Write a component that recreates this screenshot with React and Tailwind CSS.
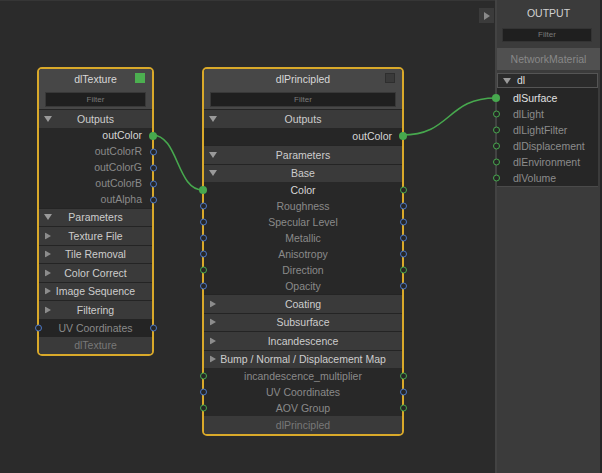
const Down = () => (
  <svg width="8" height="6" viewBox="0 0 8 6" className="absolute left-[5px] top-1/2 -translate-y-1/2">
    <polygon points="0,0 8,0 4,6" fill="#9a9a9a" />
  </svg>
);

const Right = () => (
  <svg width="6" height="7" viewBox="0 0 6 7" className="absolute left-[6px] top-1/2 -translate-y-1/2">
    <polygon points="0,0 6,3.5 0,7" fill="#8c8c8c" />
  </svg>
);

// port dot sitting on the node border
const Port = ({ side, color, filled }) => {
  if (filled) {
    return (
      <span
        className={`absolute top-1/2 h-[8px] w-[8px] -translate-y-1/2 rounded-full bg-[#47a84e] ${
          side === "left" ? "-left-[5px]" : "-right-[5px]"
        }`}
      />
    );
  }
  return (
    <span
      className={`absolute top-1/2 h-[7px] w-[7px] -translate-y-1/2 rounded-full border-[1.5px] bg-[#262626] ${
        side === "left" ? "-left-[4.5px]" : "-right-[4.5px]"
      } ${color === "green" ? "border-[#47a84e]" : "border-[#4b77c6]"}`}
    />
  );
};

const Section = ({ label, open }) => (
  <div className="relative flex h-[18.5px] items-center justify-center border-t border-[#242424] bg-[#3a3a3a] text-[#cdcdcd]">
    {open ? <Down /> : <Right />}
    <span>{label}</span>
  </div>
);

// row = [label, active, leftPort, rightPort]
const Row = ({ row, align = "center" }) => {
  const [label, active, left, right] = row;
  return (
    <div
      className={`relative flex h-[16px] items-center ${
        align === "right" ? "justify-end pr-[10px]" : "justify-center"
      } ${active ? "text-[#d6d6d6]" : "text-[#8a8a8a]"}`}
    >
      {left && <Port side="left" color={left.color} filled={left.filled} />}
      <span>{label}</span>
      {right && <Port side="right" color={right.color} filled={right.filled} />}
    </div>
  );
};

const NodeHead = ({ title, swatch }) => (
  <>
    <div className="relative flex h-[21px] items-center justify-center rounded-t-[3px] bg-[#474747] text-[#d8d8d8]">
      {title}
      <span className={`absolute right-[7px] top-[4px] h-[10px] w-[10px] ${swatch}`} />
    </div>
    <div className="bg-[#474747] px-[6px] py-[2px]">
      <div className="flex h-[15px] items-center justify-center border border-[#383838] bg-[#1f1f1f] text-[8px] text-[#7a7a7a]">
        Filter
      </div>
    </div>
  </>
);

const B = { color: "blue" };
const G = { color: "green" };
const GF = { color: "green", filled: true };

const textureOutputs = [
  ["outColor", true, null, GF],
  ["outColorR", false, null, B],
  ["outColorG", false, null, B],
  ["outColorB", false, null, B],
  ["outAlpha", false, null, B],
];

const textureSections = ["Texture File", "Tile Removal", "Color Correct", "Image Sequence", "Filtering"];

const baseRows = [
  ["Color", true, GF, G],
  ["Roughness", false, B, B],
  ["Specular Level", false, B, B],
  ["Metallic", false, B, B],
  ["Anisotropy", false, B, B],
  ["Direction", false, G, G],
  ["Opacity", false, B, B],
];

const extraRows = [
  ["incandescence_multiplier", false, G, G],
  ["UV Coordinates", false, B, B],
  ["AOV Group", false, G, G],
];

const outputs = ["dlSurface", "dlLight", "dlLightFilter", "dlDisplacement", "dlEnvironment", "dlVolume"];

export default function App() {
  return (
    <div className="relative flex h-[473px] w-[602px] overflow-hidden bg-[#2b2b2b] font-['Liberation_Sans',Arial,sans-serif] text-[10.5px] leading-none">
      {/* Canvas */}
      <div className="relative flex-1 shadow-[inset_0_1px_0_#363636]">
        {/* dlTexture */}
        <div className="absolute left-[37px] top-[67px] w-[117px] rounded-[5px] border-2 border-[#d9a92a] bg-[#282828]">
          <NodeHead title="dlTexture" swatch="bg-[#4caf50]" />
          <Section label="Outputs" open />
          {textureOutputs.map((r) => (
            <Row key={r[0]} row={r} align="right" />
          ))}
          <Section label="Parameters" open />
          {textureSections.map((s) => (
            <Section key={s} label={s} />
          ))}
          <div className="relative flex h-[18px] items-center justify-center border-t border-[#242424] bg-[#242424] text-[#8a8a8a]">
            <Port side="left" color="blue" />
            <span>UV Coordinates</span>
            <Port side="right" color="blue" />
          </div>
          <div className="flex h-[17.5px] items-center justify-center rounded-b-[3px] bg-[#3a3a3a] text-[#787878]">
            dlTexture
          </div>
        </div>

        {/* dlPrincipled */}
        <div className="absolute left-[202px] top-[67px] w-[202px] rounded-[5px] border-2 border-[#d9a92a] bg-[#282828]">
          <NodeHead title="dlPrincipled" swatch="bg-[#3a3a3a] border border-[#2e2e2e]" />
          <Section label="Outputs" open />
          <div className="relative flex h-[17.5px] items-center justify-end bg-[#262626] pr-[10px] text-[#d6d6d6]">
            <span>outColor</span>
            <Port side="right" color="green" filled />
          </div>
          <Section label="Parameters" open />
          <Section label="Base" open />
          {baseRows.map((r) => (
            <Row key={r[0]} row={r} />
          ))}
          <Section label="Coating" />
          <Section label="Subsurface" />
          <Section label="Incandescence" />
          <Section label="Bump / Normal / Displacement Map" />
          {extraRows.map((r) => (
            <Row key={r[0]} row={r} />
          ))}
          <div className="flex h-[18px] items-center justify-center rounded-b-[3px] bg-[#3a3a3a] text-[#787878]">
            dlPrincipled
          </div>
        </div>

        {/* panel toggle */}
        <button className="absolute right-[1px] top-[8px] flex h-[15px] w-[15px] items-center justify-center bg-[#3b3b3b]">
          <svg width="6" height="8" viewBox="0 0 6 8">
            <polygon points="0,0 6,4 0,8" fill="#8a8a8a" />
          </svg>
        </button>
      </div>

      {/* Output panel */}
      <aside className="flex w-[105px] flex-col border-l-2 border-[#434343] bg-[#3b3b3b]">
        <div className="flex h-[26px] items-center justify-center text-[#d2d2d2]">OUTPUT</div>
        <div className="ml-[5px] mr-[8px] mt-[2px] flex h-[14px] items-center justify-center border border-[#333] bg-[#1f1f1f] text-[8px] text-[#7a7a7a]">
          Filter
        </div>
        <div className="mt-[6px] flex h-[22px] items-center justify-center bg-[#505050] text-[#888]">
          NetworkMaterial
        </div>
        <div className="relative mr-[2px] mt-[3px] flex h-[15px] items-center border border-[#555] bg-[#2b2b2b] pl-[19px] text-[#dedede]">
          <svg width="8" height="6" viewBox="0 0 8 6" className="absolute left-[5px] top-1/2 -translate-y-1/2">
            <polygon points="0,0 8,0 4,6" fill="#9a9a9a" />
          </svg>
          dl
        </div>
        <div className="mr-[2px] border-b border-[#4a4a4a] bg-[#262626] pt-[2px]">
          {outputs.map((o, i) => (
            <div
              key={o}
              className={`relative flex h-[16px] items-center pl-[16px] ${
                i === 0 ? "text-[#e2e2e2]" : "text-[#8c8c8c]"
              }`}
            >
              <Port side="left" color="green" filled={i === 0} />
              {o}
            </div>
          ))}
        </div>
      </aside>
      <div className="w-[2px] bg-[#262626]" />

      {/* connections */}
      <svg className="pointer-events-none absolute left-0 top-0" width="602" height="473">
        <path d="M152 135 C 179 135, 176 190, 203 190" fill="none" stroke="#47a84e" strokeWidth="1.6" />
        <path d="M402 135 C 452 135, 446 98, 496 98" fill="none" stroke="#47a84e" strokeWidth="1.6" />
      </svg>
    </div>
  );
}
